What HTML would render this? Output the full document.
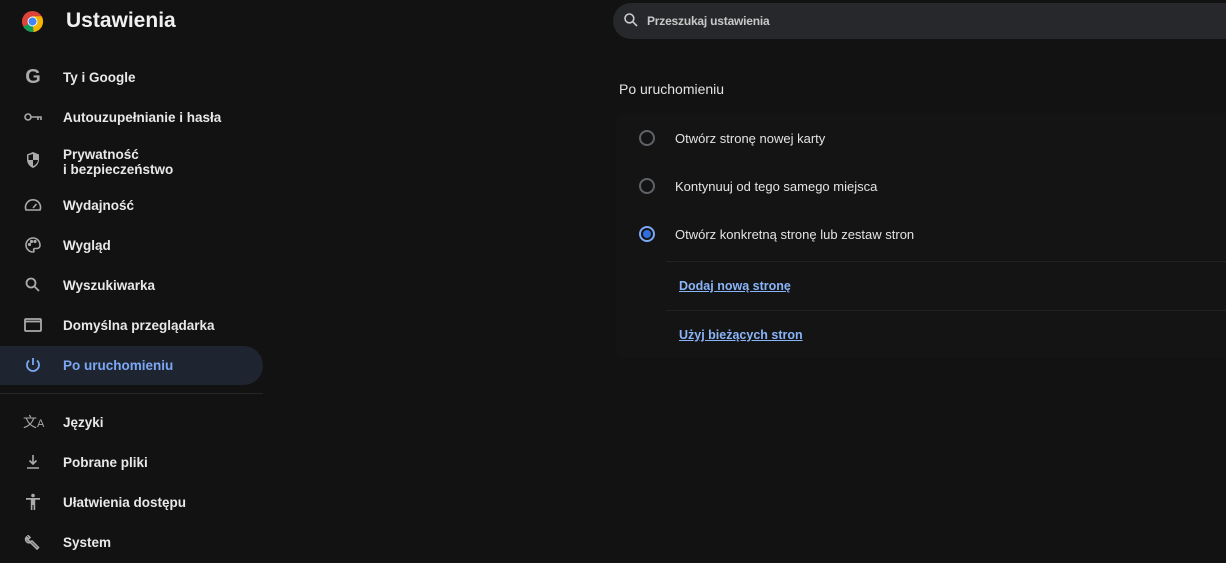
<!DOCTYPE html>
<html><head><meta charset="utf-8"><style>
body{margin:0;width:1226px;height:563px;background:#121212;font-family:"Liberation Sans",sans-serif;color:#e3e3e3;position:relative;overflow:hidden}
.a{position:absolute}
.nav{position:absolute;left:63px;font-size:13.5px;font-weight:bold;color:#e8e8e8;white-space:nowrap;line-height:15px}
.ic{position:absolute;left:23px;width:20px;height:20px}
.opt{position:absolute;left:675px;font-size:13px;color:#e3e3e3}
.rad{position:absolute;left:639px;width:12px;height:12px;border:2px solid #5f6368;border-radius:50%}
.lnk{position:absolute;left:679px;font-size:12.5px;font-weight:bold;color:#8ab4f8;text-decoration:underline}
</style></head><body>
<svg class="a" style="left:21px;top:10px" width="23" height="23" viewBox="0 0 24 24"><circle cx="12" cy="12" r="11" fill="#db4437"/><path d="M12 12 L13 23 A11 11 0 0 0 21.5 6.5 L12 6.5Z" fill="#f4b400"/><path d="M12 12 L2.5 17.5 A11 11 0 0 0 13 23Z" fill="#0f9d58"/><circle cx="12" cy="12" r="5.2" fill="#fff"/><circle cx="12" cy="12" r="4.2" fill="#4285f4"/></svg>
<div class="a" style="left:66px;top:9px;font-size:21px;font-weight:bold;color:#f0f0f0">Ustawienia</div>

<div class="ic" style="top:67px;font-size:20px;font-weight:bold;color:#aaa;text-align:center;line-height:20px">G</div>
<div class="nav" style="top:70px">Ty i Google</div>
<svg class="ic" style="top:107px" viewBox="0 0 20 20" fill="none" stroke="#aaa" stroke-width="1.6"><circle cx="5" cy="10" r="3"/><path d="M8 10h10v3M15 10v3"/></svg>
<div class="nav" style="top:110px">Autouzupełnianie i hasła</div>
<svg class="ic" style="top:150px" viewBox="0 0 20 20"><path d="M10 2l6 2.5v5c0 4-2.7 7-6 8.5C6.7 16.5 4 13.5 4 9.5v-5z" fill="#aaa"/><path d="M10 10h5c-.5 3-2.5 5-5 6z" fill="#121212"/><path d="M10 4v6H5.5V5.3z" fill="#121212"/></svg>
<div class="nav" style="top:147px">Prywatność<br>i bezpieczeństwo</div>
<svg class="ic" style="top:195px" viewBox="0 0 20 20" fill="none" stroke="#aaa" stroke-width="1.6"><path d="M3 15a7.5 7.5 0 1 1 14 0z"/><path d="M10 13l3.5-4"/></svg>
<div class="nav" style="top:198px">Wydajność</div>
<svg class="ic" style="top:235px" viewBox="0 0 20 20" fill="none" stroke="#aaa" stroke-width="1.6"><path d="M10 3a7 7 0 1 0 0 14c1 0 1.3-1 .8-1.7-.6-.8 0-1.8 1-1.8H14a3 3 0 0 0 3-3C17 6 14 3 10 3z"/><circle cx="6.5" cy="9.5" r=".8"/><circle cx="8.5" cy="6.5" r=".8"/><circle cx="12" cy="6.5" r=".8"/></svg>
<div class="nav" style="top:238px">Wygląd</div>
<svg class="ic" style="top:275px" viewBox="0 0 20 20" fill="none" stroke="#aaa" stroke-width="1.8"><circle cx="8" cy="8" r="4.5"/><path d="M11.5 11.5L16 16"/></svg>
<div class="nav" style="top:278px">Wyszukiwarka</div>
<svg class="ic" style="top:315px" viewBox="0 0 20 20" fill="none" stroke="#aaa" stroke-width="1.8"><rect x="2" y="4" width="16" height="12" rx="1"/><path d="M2 6.5h16"/></svg>
<div class="nav" style="top:318px">Domyślna przeglądarka</div>
<div class="a" style="left:0;top:346px;width:263px;height:39px;background:#1f2530;border-radius:0 20px 20px 0"></div>
<svg class="ic" style="top:355px" viewBox="0 0 20 20" fill="none" stroke="#7ca7f5" stroke-width="1.8"><path d="M10 3v7"/><path d="M6 5.5a6 6 0 1 0 8 0"/></svg>
<div class="nav" style="top:358px;color:#7ca7f5">Po uruchomieniu</div>
<div class="a" style="left:0;top:393px;width:263px;height:1px;background:#262626"></div>
<div class="ic" style="top:412px;width:30px;white-space:nowrap;font-size:14px;color:#aaa;line-height:20px;font-family:'Noto Sans CJK SC',sans-serif">文<span style="font-size:11px;font-family:'Liberation Sans'">A</span></div>
<div class="nav" style="top:415px">Języki</div>
<svg class="ic" style="top:452px" viewBox="0 0 20 20" fill="none" stroke="#aaa" stroke-width="1.6"><path d="M10 3v9M6.5 8.5L10 12l3.5-3.5M4 16h12"/></svg>
<div class="nav" style="top:455px">Pobrane pliki</div>
<svg class="ic" style="top:492px" viewBox="0 0 20 20" fill="#aaa"><circle cx="10" cy="3.5" r="1.8"/><path d="M3 6h14v1.8h-4.8V18h-1.6v-5h-1.2v5H7.8V7.8H3z"/></svg>
<div class="nav" style="top:495px">Ułatwienia dostępu</div>
<svg class="ic" style="top:532px" viewBox="0 0 20 20" fill="none" stroke="#aaa" stroke-width="1.6"><path d="M4 5.5a3.5 3.5 0 0 0 5 3.5l6.5 6.5-1.5 1.5L7.5 10.5A3.5 3.5 0 0 1 3.5 5l2 2 1.5-1.5-2-2a3.5 3.5 0 0 1 .1-.1"/></svg>
<div class="nav" style="top:535px">System</div>

<div class="a" style="left:613px;top:3px;width:640px;height:36px;background:#27282b;border-radius:18px"></div>
<svg class="a" style="left:623px;top:12px" width="16" height="16" viewBox="0 0 20 20" fill="none" stroke="#ccc" stroke-width="2"><circle cx="8" cy="8" r="5.5"/><path d="M12 12l5.5 5.5"/></svg>
<div class="a" style="left:647px;top:14px;font-size:12px;font-weight:bold;color:#c8c8c8;letter-spacing:-0.2px">Przeszukaj ustawienia</div>
<div class="a" style="left:619px;top:81px;font-size:14px;color:#e3e3e3">Po uruchomieniu</div>
<div class="a" style="left:616px;top:113px;width:620px;height:245px;background:#141414;border-radius:8px"></div>
<div class="rad" style="top:130px"></div><div class="opt" style="top:131px">Otwórz stronę nowej karty</div>
<div class="rad" style="top:178px"></div><div class="opt" style="top:179px">Kontynuuj od tego samego miejsca</div>
<div class="rad" style="top:226px;border-color:#7ca7f5"><div style="margin:2px;width:8px;height:8px;border-radius:50%;background:#2f6fdc"></div></div>
<div class="opt" style="top:227px">Otwórz konkretną stronę lub zestaw stron</div>
<div class="a" style="left:666px;top:261px;width:560px;height:1px;background:#222"></div>
<div class="lnk" style="top:279px">Dodaj nową stronę</div>
<div class="a" style="left:666px;top:310px;width:560px;height:1px;background:#222"></div>
<div class="lnk" style="top:328px">Użyj bieżących stron</div>
</body></html>
